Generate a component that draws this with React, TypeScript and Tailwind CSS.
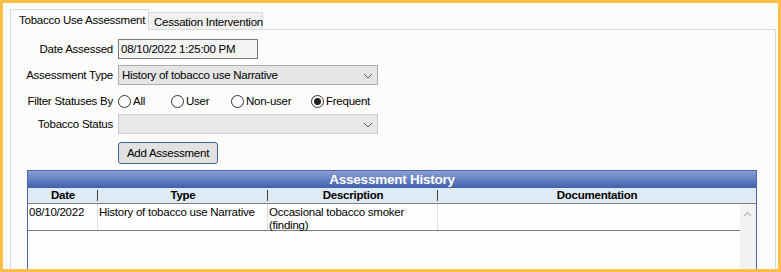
import React from "react";

const font = { fontFamily: '"Liberation Sans", Arial, sans-serif', letterSpacing: "-0.25px" };

function Chevron() {
  return (
    <svg width="10" height="6" viewBox="0 0 10 6" className="absolute right-[4px] top-[7px]">
      <path d="M1 1 L5 5 L9 1" fill="none" stroke="#555" strokeWidth="1" />
    </svg>
  );
}

function Radio({ label, checked }: { label: string; checked?: boolean }) {
  return (
    <div className="flex items-center">
      <div className="w-[13px] h-[13px] rounded-full border border-[#333] bg-white flex items-center justify-center">
        {checked && <div className="w-[7px] h-[7px] rounded-full bg-[#222]" />}
      </div>
      <span className="ml-[2px]">{label}</span>
    </div>
  );
}

export default function App() {
  return (
    <div className="w-[781px] h-[272px] border-[3px] border-[#fcbf49] bg-[#fcfdfa] overflow-hidden text-[11.5px] text-black leading-[14px] whitespace-nowrap" style={font}>
      <div className="pl-[7px] pr-[2px] pt-[6px]">
        {/* tabs */}
        <div className="flex items-end h-[20px] relative z-10">
          <div className="w-[139px] h-[21px] border border-b-0 border-[#d9d9d9] bg-[#fcfdfa] pl-[8px] pt-[3px] mb-[-1px]">
            Tobacco Use Assessment
          </div>
          <div className="w-[114px] h-[17px] border border-l-0 border-b-0 border-[#d9d9d9] bg-[#f0f0f0] pl-[5px] pt-[2px]">
            Cessation Intervention
          </div>
        </div>
        {/* panel */}
        <div className="border border-[#d9d9d9] h-[260px] pt-[9px]">
          <div className="flex items-center h-[20px]">
            <div className="w-[102px] text-right">Date Assessed</div>
            <div className="ml-[5px] w-[140px] h-[20px] border border-[#7a7a7a] bg-[#f3f3f3] pl-[2px] pt-[2px]">08/10/2022 1:25:00 PM</div>
          </div>
          <div className="flex items-center h-[20px] mt-[6px]">
            <div className="w-[102px] text-right">Assessment Type</div>
            <div className="relative ml-[5px] w-[260px] h-[20px] border border-[#adadad] bg-[#e5e5e5] pl-[3px] pt-[2px]">
              History of tobacco use Narrative
              <Chevron />
            </div>
          </div>
          <div className="flex items-center h-[20px] mt-[6px]">
            <div className="w-[102px] text-right">Filter Statuses By</div>
            <div className="ml-[5px] flex">
              <div className="w-[53px]"><Radio label="All" /></div>
              <div className="w-[60px]"><Radio label="User" /></div>
              <div className="w-[80px]"><Radio label="Non-user" /></div>
              <Radio label="Frequent" checked />
            </div>
          </div>
          <div className="flex items-center h-[20px] mt-[3px]">
            <div className="w-[102px] text-right">Tobacco Status</div>
            <div className="relative ml-[5px] w-[260px] h-[20px] border border-[#cccccc] bg-[#e8e8e8]">
              <Chevron />
            </div>
          </div>
          <div className="flex mt-[8px]">
            <div className="ml-[107px] w-[100px] h-[22px] rounded-[3px] border border-[#3e6790] bg-[#e1e1e1] flex items-center justify-center">
              Add Assessment
            </div>
          </div>
          {/* grid */}
          <div className="ml-[16px] mt-[6px] w-[730px] h-[120px] border-x border-[#4f66a6] bg-[#fefefe]">
            <div className="h-[18px] border-t border-[#4f66a6] bg-gradient-to-b from-[#8a9fd6] to-[#4260ad] text-white font-bold text-[13.5px] leading-[17px] text-center">
              Assessment History
            </div>
            <div className="flex h-[16px] bg-[#deebf5] border-b border-[#808080] font-bold leading-[15px] relative">
              <div className="w-[70px] text-center relative">Date<div className="absolute right-0 top-[2px] h-[11px] border-r border-[#444]" /></div>
              <div className="w-[170px] text-center relative">Type<div className="absolute right-0 top-[2px] h-[11px] border-r border-[#444]" /></div>
              <div className="w-[170px] text-center relative">Description<div className="absolute right-0 top-[2px] h-[11px] border-r border-[#444]" /></div>
              <div className="flex-1 text-center">Documentation</div>
            </div>
            <div className="flex">
              <div className="w-[712px]">
                <div className="flex h-[27px] border-b border-[#808080] leading-[13px]">
                  <div className="w-[70px] border-r border-[#e0e0e0] pl-[1px] pt-[2px]">08/10/2022</div>
                  <div className="w-[170px] border-r border-[#e0e0e0] pl-[1px] pt-[2px]">History of tobacco use Narrative</div>
                  <div className="w-[170px] border-r border-[#e0e0e0] pl-[1px] pt-[2px] whitespace-normal">Occasional tobacco smoker (finding)</div>
                  <div className="flex-1" />
                </div>
              </div>
              <div className="w-[16px] h-[80px] bg-[#f2f2f2] relative">
                <svg width="9" height="6" viewBox="0 0 9 6" className="absolute left-[3px] top-[7px]">
                  <path d="M1 5 L4.5 1.5 L8 5" fill="none" stroke="#c0c0c0" strokeWidth="1.5" />
                </svg>
              </div>
            </div>
          </div>
        </div>
      </div>
    </div>
  );
}
